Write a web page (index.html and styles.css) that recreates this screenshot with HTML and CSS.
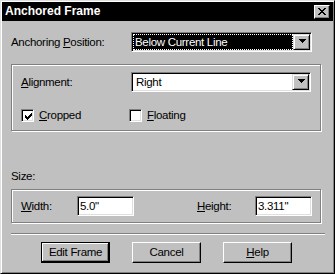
FILE: index.html
```html
<!DOCTYPE html>
<html>
<head>
<meta charset="utf-8">
<link rel="stylesheet" href="styles.css">
</head>
<body>
<div class="window">
  <div class="titlebar">
    <span class="title">Anchored Frame</span>
    <span class="close">
      <svg width="8" height="7" viewBox="0 0 8 7" shape-rendering="crispEdges">
        <rect x="0" y="0" width="2" height="1"/><rect x="6" y="0" width="2" height="1"/>
        <rect x="1" y="1" width="2" height="1"/><rect x="5" y="1" width="2" height="1"/>
        <rect x="2" y="2" width="4" height="1"/>
        <rect x="3" y="3" width="2" height="1"/>
        <rect x="2" y="4" width="4" height="1"/>
        <rect x="1" y="5" width="2" height="1"/><rect x="5" y="5" width="2" height="1"/>
        <rect x="0" y="6" width="2" height="1"/><rect x="6" y="6" width="2" height="1"/>
      </svg>
    </span>
  </div>
  <div class="content">
    <div class="row">
      <span class="label label-anchor">Anchoring <u>P</u>osition:</span>
      <div class="combo sunken combo-wide">
        <div class="combo-value selected"><span>Below Current Line</span></div>
        <div class="combo-btn">
          <svg width="7" height="4" viewBox="0 0 7 4" shape-rendering="crispEdges">
            <rect x="0" y="0" width="7" height="1"/><rect x="1" y="1" width="5" height="1"/>
            <rect x="2" y="2" width="3" height="1"/><rect x="3" y="3" width="1" height="1"/>
          </svg>
        </div>
      </div>
    </div>

    <div class="group group-align">
      <div class="row">
        <span class="label label-align"><u>A</u>lignment:</span>
        <div class="combo sunken combo-narrow">
          <div class="combo-value plain">Right</div>
          <div class="combo-btn">
            <svg width="7" height="4" viewBox="0 0 7 4" shape-rendering="crispEdges">
              <rect x="0" y="0" width="7" height="1"/><rect x="1" y="1" width="5" height="1"/>
              <rect x="2" y="2" width="3" height="1"/><rect x="3" y="3" width="1" height="1"/>
            </svg>
          </div>
        </div>
      </div>
      <div class="checks">
        <div class="check check-first">
          <span class="box sunken">
            <svg width="7" height="7" viewBox="0 0 7 7" shape-rendering="crispEdges">
              <rect x="6" y="0" width="1" height="1"/>
              <rect x="5" y="1" width="2" height="1"/>
              <rect x="0" y="2" width="1" height="1"/><rect x="4" y="2" width="3" height="1"/>
              <rect x="0" y="3" width="2" height="1"/><rect x="3" y="3" width="3" height="1"/>
              <rect x="0" y="4" width="5" height="1"/>
              <rect x="1" y="5" width="3" height="1"/>
              <rect x="2" y="6" width="1" height="1"/>
            </svg>
          </span>
          <span><u>C</u>ropped</span>
        </div>
        <div class="check">
          <span class="box sunken"></span>
          <span><u>F</u>loating</span>
        </div>
      </div>
    </div>

    <div class="size-label">Size:</div>

    <div class="group group-size">
      <div class="row">
        <span class="label label-width"><u>W</u>idth:</span>
        <div class="input sunken">5.0"</div>
        <span class="label label-height"><u>H</u>eight:</span>
        <div class="input sunken">3.311"</div>
      </div>
    </div>

    <div class="sep"></div>

    <div class="buttons">
      <div class="btn default">Edit Frame</div>
      <div class="btn">Cancel</div>
      <div class="btn"><span><u>H</u>elp</span></div>
    </div>
  </div>
</div>
</body>
</html>
```

FILE: styles.css
```css
* { box-sizing: border-box; }

body {
  margin: 0;
  background: #c0c0c0;
  font-family: "Liberation Sans", Arial, sans-serif;
  font-size: 11.5px;
  letter-spacing: -0.3px;
  line-height: 13px;
  color: #000;
}

.window {
  width: 335px;
  height: 274px;
  background: #c0c0c0;
  border: 1px solid;
  border-color: #dfdfdf #000 #000 #dfdfdf;
  box-shadow: inset 1px 1px #fff, inset -1px -1px #808080;
  padding: 1px;
}

.titlebar {
  height: 19px;
  background: #000;
  color: #fff;
  display: flex;
  align-items: center;
  justify-content: space-between;
  padding: 0 3px 0 3px;
}

.title {
  font-weight: bold;
  font-size: 12px;
  letter-spacing: 0;
}

.close {
  align-self: flex-start;
  margin-top: 3px;
  width: 16px;
  height: 14px;
  background: #c0c0c0;
  border: 1px solid;
  border-color: #fff #000 #000 #fff;
  box-shadow: inset -1px -1px #808080;
  padding: 2px 0 0 3px;
}

.close svg, .combo-btn svg, .box svg { display: block; fill: #000; }

.content {
  padding: 11px 0 0 9px;
  display: flex;
  flex-direction: column;
}

.row {
  display: flex;
  align-items: center;
  height: 20px;
}

.label-anchor { width: 120px; }
.label-align { width: 110px; }
.label-width { width: 56px; }
.label-height { width: 58px; margin-left: 63px; }

.sunken {
  border: 1px solid;
  border-color: #808080 #fff #fff #808080;
  box-shadow: inset 1px 1px #000, inset -1px -1px #dfdfdf;
  padding: 1px;
}

.combo {
  display: flex;
  height: 20px;
  background: #fff;
}
.combo-wide { width: 181px; }
.combo-narrow { width: 180px; }

.combo-value {
  flex: 1;
  display: flex;
  align-items: center;
}
.combo-value.selected {
  background: #000;
  color: #fff;
  border: 1px dotted #fff;
  padding-left: 1px;
}
.combo-value.plain { padding-left: 3px; }

.combo-btn {
  width: 17px;
  height: 16px;
  background: #c0c0c0;
  border: 1px solid;
  border-color: #dfdfdf #000 #000 #dfdfdf;
  box-shadow: inset 1px 1px #fff, inset -1px -1px #808080;
  padding: 4px 0 0 5px;
}

.group {
  width: 310px;
  border: 1px solid #808080;
  box-shadow: inset 1px 1px #fff, 1px 1px #fff;
  padding-left: 9px;
}
.group-align {
  margin-top: 12px;
  height: 67px;
  padding-top: 7px;
}
.group-size {
  margin-top: 6px;
  height: 34px;
  padding-top: 6px;
}

.checks {
  display: flex;
  margin-top: 17px;
  height: 13px;
}
.check {
  display: flex;
  align-items: center;
  gap: 5px;
}
.check-first { width: 108px; }

.box {
  width: 13px;
  height: 13px;
  background: #fff;
  padding: 2px;
}
.box svg { margin: 1px 0 0 1px; }

.size-label { margin-top: 39px; }

.input {
  width: 57px;
  height: 20px;
  background: #fff;
  padding-left: 2px;
  display: flex;
  align-items: center;
}

.sep {
  margin-top: 10px;
  width: 314px;
  height: 2px;
  border-top: 1px solid #808080;
  border-bottom: 1px solid #fff;
}

.buttons {
  margin-top: 7px;
  padding-left: 30px;
  display: flex;
  gap: 22px;
}

.btn {
  width: 69px;
  height: 21px;
  background: #c0c0c0;
  border: 1px solid;
  border-color: #fff #000 #000 #fff;
  box-shadow: inset -1px -1px #808080;
  display: flex;
  align-items: center;
  justify-content: center;
}
.btn.default {
  border-color: #000;
  box-shadow: inset -1px -1px #000, inset 1px 1px #fff, inset -2px -2px #808080;
}
```
